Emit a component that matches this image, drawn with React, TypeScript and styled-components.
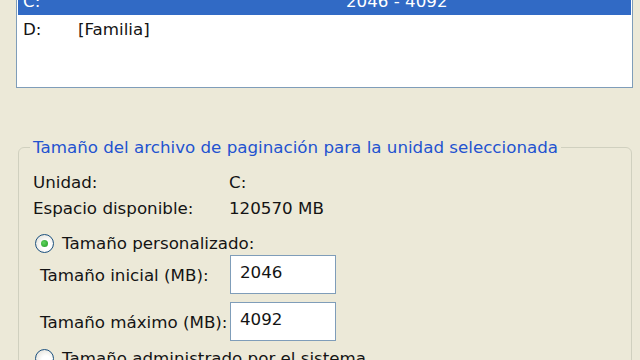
import React from 'react';
import styled, { createGlobalStyle } from 'styled-components';

const GlobalStyle = createGlobalStyle`
    html, body {
        margin: 0;
        padding: 0;
        background: #ece9d8;
        overflow: hidden;
    }
    body {
        font-family: "DejaVu Sans", Verdana, sans-serif;
        font-size: 16.7px;
        color: #141414;
    }
`;

const drives = [
    { drive: 'C:', label: '', size: '2046 - 4092', selected: true },
    { drive: 'D:', label: '[Familia]', size: '', selected: false },
];

const App = () => {
    return (
        <Page>
            <GlobalStyle />
            <ListBox>
                {drives.map((d) => (
                    <DriveRow key={d.drive} selected={d.selected}>
                        <DriveCell>{d.drive}</DriveCell>
                        <LabelCell>{d.label}</LabelCell>
                        <SizeCell>{d.size}</SizeCell>
                    </DriveRow>
                ))}
            </ListBox>

            <Group>
                <Legend>Tamaño del archivo de paginación para la unidad seleccionada</Legend>
                <InfoGrid>
                    <InfoLabel>Unidad:</InfoLabel>
                    <InfoValue>C:</InfoValue>
                    <InfoLabel>Espacio disponible:</InfoLabel>
                    <InfoValue>120570 MB</InfoValue>
                </InfoGrid>

                <RadioRow>
                    <Radio checked />
                    <span>Tamaño personalizado:</span>
                </RadioRow>

                <FieldRow>
                    <FieldLabel>Tamaño inicial (MB):</FieldLabel>
                    <TextBox>2046</TextBox>
                </FieldRow>
                <FieldRow>
                    <FieldLabel>Tamaño máximo (MB):</FieldLabel>
                    <TextBox>4092</TextBox>
                </FieldRow>

                <RadioRow second>
                    <Radio />
                    <span>Tamaño administrado por el sistema</span>
                </RadioRow>
            </Group>
        </Page>
    );
};

const Page = styled.div`
    width: 640px;
    height: 360px;
    overflow: hidden;
`;

const ListBox = styled.div`
    margin: -14px 7px 0 16px;
    height: 100px;
    border: 1px solid #7f9db9;
    background: #ffffff;
    padding: 0 1px;
`;

const DriveRow = styled.div<{ selected?: boolean }>`
    display: flex;
    align-items: center;
    height: 28px;
    padding-left: 5px;
    background: ${(p) => (p.selected ? '#316ac5' : 'transparent')};
    color: ${(p) => (p.selected ? '#ffffff' : '#141414')};
`;

const DriveCell = styled.div`
    width: 55px;
`;

const LabelCell = styled.div`
    width: 268px;
`;

const SizeCell = styled.div``;

const Group = styled.fieldset`
    margin: 49px 8px 0 18px;
    padding: 12px 8px 0 11px;
    border: 1px solid #d0d0bf;
    border-radius: 6px;
    height: 300px;
`;

const Legend = styled.legend`
    padding: 0 3px;
    line-height: 20px;
    color: #2353d0;
`;

const InfoGrid = styled.div`
    display: grid;
    grid-template-columns: 196px 1fr;
    grid-auto-rows: 26px;
    align-items: center;
    padding-left: 3px;
`;

const InfoLabel = styled.div``;

const InfoValue = styled.div``;

const RadioRow = styled.div<{ second?: boolean }>`
    display: flex;
    align-items: center;
    gap: 8px;
    height: 24px;
    margin-top: ${(p) => (p.second ? '5px' : '10px')};
    padding-left: 5px;
`;

const Radio = styled.span<{ checked?: boolean }>`
    position: relative;
    width: 17px;
    height: 17px;
    border-radius: 50%;
    border: 1px solid #1c5180;
    background: radial-gradient(circle at 60% 60%, #ffffff 30%, #dcdad0 100%);
    flex-shrink: 0;

    &::after {
        content: '';
        display: ${(p) => (p.checked ? 'block' : 'none')};
        position: absolute;
        left: 5px;
        top: 5px;
        width: 7px;
        height: 7px;
        border-radius: 50%;
        background: radial-gradient(circle at 40% 40%, #5fd35f, #219921);
    }
`;

const FieldRow = styled.div`
    display: flex;
    align-items: center;
    height: 39px;
    padding-left: 10px;

    & + & {
        margin-top: 8px;
    }
`;

const FieldLabel = styled.div`
    width: 190px;
`;

const TextBox = styled.div`
    box-sizing: border-box;
    width: 106px;
    height: 39px;
    border: 1px solid #7f9db9;
    background: #ffffff;
    padding: 6px 0 0 9px;
    line-height: 20px;
`;

export default App;
